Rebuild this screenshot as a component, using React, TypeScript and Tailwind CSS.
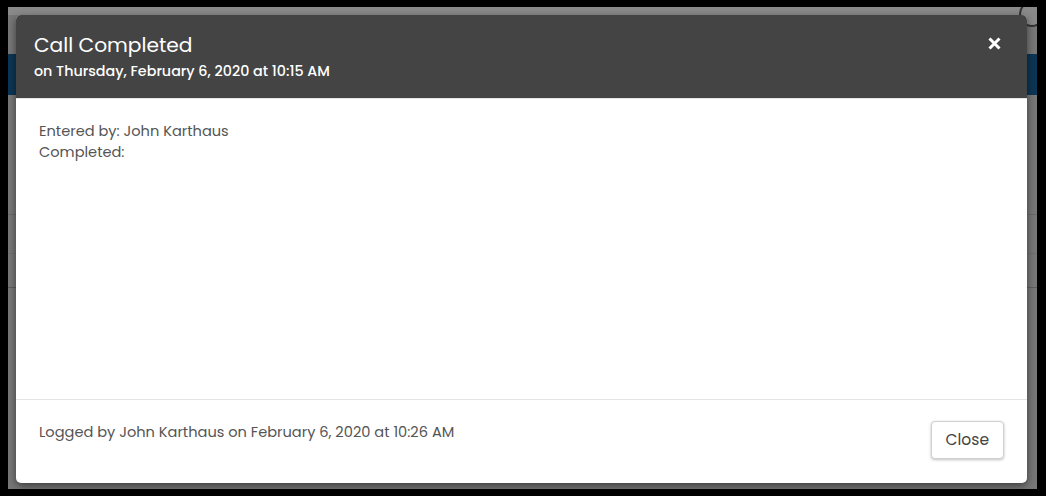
import React from 'react';

const font = { fontFamily: 'Poppins, Inter, "Noto Sans", sans-serif' };

const App: React.FC = () => {
  return (
    <div className="w-[1046px] h-[496px] bg-black pt-[7px] pl-[8px] pr-[9px] pb-[7px]" style={font}>
      <div className="relative w-full h-full bg-[#787878] overflow-hidden">
        {/* dimmed page behind the modal */}
        <div className="absolute inset-x-0 top-0 h-[8px] bg-[#8a8a8a]" />
        <div className="absolute inset-x-0 top-[47px] h-[41px] bg-[#0c3656]" />
        <div className="absolute inset-x-0 top-[207px] h-px bg-[#6a6a6a]" />
        <div className="absolute inset-x-0 top-[246px] h-px bg-[#707070]" />
        <div className="absolute inset-x-0 top-[280px] h-px bg-[#5e5e5e]" />
        <div className="absolute right-[-8px] top-[-6px] w-[26px] h-[26px] rounded-full border-2 border-[#333] bg-[#8a8a8a]" />

        {/* modal */}
        <div className="absolute left-[8px] top-[8px] w-[1011px] h-[468px] bg-white rounded-[5px] shadow-[0_3px_9px_rgba(0,0,0,0.5)] flex flex-col overflow-hidden">
          <div className="h-[84px] bg-[#444444] border-b border-[#e5e5e5] flex items-start justify-between pl-[18px] pr-[26px] pt-[18px]">
            <div>
              <h4 className="text-white text-[20.2px] leading-[25px]">Call Completed</h4>
              <div className="text-white text-[14.3px] font-medium leading-[20px] mt-[3px]">
                on Thursday, February 6, 2020 at 10:15 AM
              </div>
            </div>
            <button className="text-white mt-[4px]" aria-label="Close">
              <svg width="13" height="13" viewBox="0 0 13 13">
                <path d="M1.5 1.5 L11.5 11.5 M11.5 1.5 L1.5 11.5" stroke="white" strokeWidth="3" strokeLinecap="butt" />
              </svg>
            </button>
          </div>

          <div className="flex-1 px-[23px] pt-[22px] text-[14.6px] leading-[21px] text-[#555]">
            <div>Entered by: John Karthaus</div>
            <div>Completed:</div>
          </div>

          <div className="h-[84px] border-t border-[#e5e5e5] flex items-start justify-between pl-[23px] pr-[23px] pt-[22px]">
            <div className="text-[14.6px] leading-[21px] text-[#555]">
              Logged by John Karthaus on February 6, 2020 at 10:26 AM
            </div>
            <button className="mt-[-1px] h-[38px] px-[14px] bg-white border border-[#d0d0d0] rounded-[4px] shadow-[0_1px_3px_rgba(0,0,0,0.25)] text-[15.5px] text-[#444]">
              Close
            </button>
          </div>
        </div>
      </div>
    </div>
  );
};

export default App;
